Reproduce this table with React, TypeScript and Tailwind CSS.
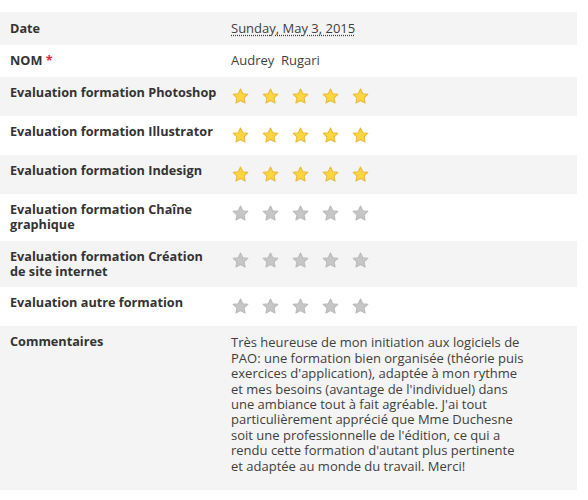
const rows: { label: string; kind: "text" | "date" | "stars" | "comment"; value?: string; rating?: number; required?: boolean }[] = [
  { label: "Date", kind: "date", value: "Sunday, May 3, 2015" },
  { label: "NOM", kind: "text", value: "Audrey\u00a0\u00a0Rugari", required: true },
  { label: "Evaluation formation Photoshop", kind: "stars", rating: 5 },
  { label: "Evaluation formation Illustrator", kind: "stars", rating: 5 },
  { label: "Evaluation formation Indesign", kind: "stars", rating: 5 },
  { label: "Evaluation formation Chaîne graphique", kind: "stars", rating: 0 },
  { label: "Evaluation formation Création de site internet", kind: "stars", rating: 0 },
  { label: "Evaluation autre formation", kind: "stars", rating: 0 },
  {
    label: "Commentaires",
    kind: "comment",
    value:
      "Très heureuse de mon initiation aux logiciels de PAO: une formation bien organisée (théorie puis exercices d'application), adaptée à mon rythme et mes besoins (avantage de l'individuel) dans une ambiance tout à fait agréable. J'ai tout particulièrement apprécié que Mme Duchesne soit une professionnelle de l'édition, ce qui a rendu cette formation d'autant plus pertinente et adaptée au monde du travail. Merci!",
  },
];

function Star({ on }: { on: boolean }) {
  return (
    <svg width="19" height="19" viewBox="0 0 24 24" className="shrink-0">
      <path
        d="M12 2.6l2.8 5.95 6.45.8-4.75 4.45 1.3 6.4L12 17l-5.8 3.2 1.3-6.4-4.75-4.45 6.45-.8z"
        fill={on ? "#fdd53e" : "#c6c6c6"}
        stroke={on ? "#e8bb3e" : "#bbbbbb"}
        strokeWidth="1.4"
        strokeLinejoin="round"
      />
    </svg>
  );
}

export default function App() {
  return (
    <div className="bg-white pt-[12px] text-[13px] leading-[15.4px] text-[#3a3a3a]" style={{ fontFamily: "'Open Sans', 'DejaVu Sans', sans-serif" }}>
      <table className="w-[577px] border-collapse">
        <tbody>
          {rows.map((r, i) => (
            <tr key={r.label} className={i % 2 === 0 ? "bg-[#f4f4f4]" : "bg-white"}>
              <td className={`w-[221px] pl-[10px] pr-[2px] align-top text-[12.7px] font-bold text-[#333] ${r.kind === "date" ? "py-[9px]" : "py-[8px]"}`}>
                {r.label}
                {r.required && <span className="text-[#e0263f]"> *</span>}
              </td>
              <td className={`pl-[10px] pr-[50px] align-top text-[#3f3f3f] ${r.kind === "comment" ? "pt-[9px] pb-[16px]" : r.kind === "stars" ? "pt-[10px] pb-[10px]" : r.kind === "date" ? "py-[9px]" : "py-[8px]"}`}>
                {r.kind === "date" && <span className="underline decoration-dotted underline-offset-2">{r.value}</span>}
                {r.kind === "text" && r.value}
                {r.kind === "comment" && r.value}
                {r.kind === "stars" && (
                  <div className="flex gap-[11px]">
                    {[0, 1, 2, 3, 4].map((k) => (
                      <Star key={k} on={k < (r.rating ?? 0)} />
                    ))}
                  </div>
                )}
              </td>
            </tr>
          ))}
        </tbody>
      </table>
    </div>
  );
}
